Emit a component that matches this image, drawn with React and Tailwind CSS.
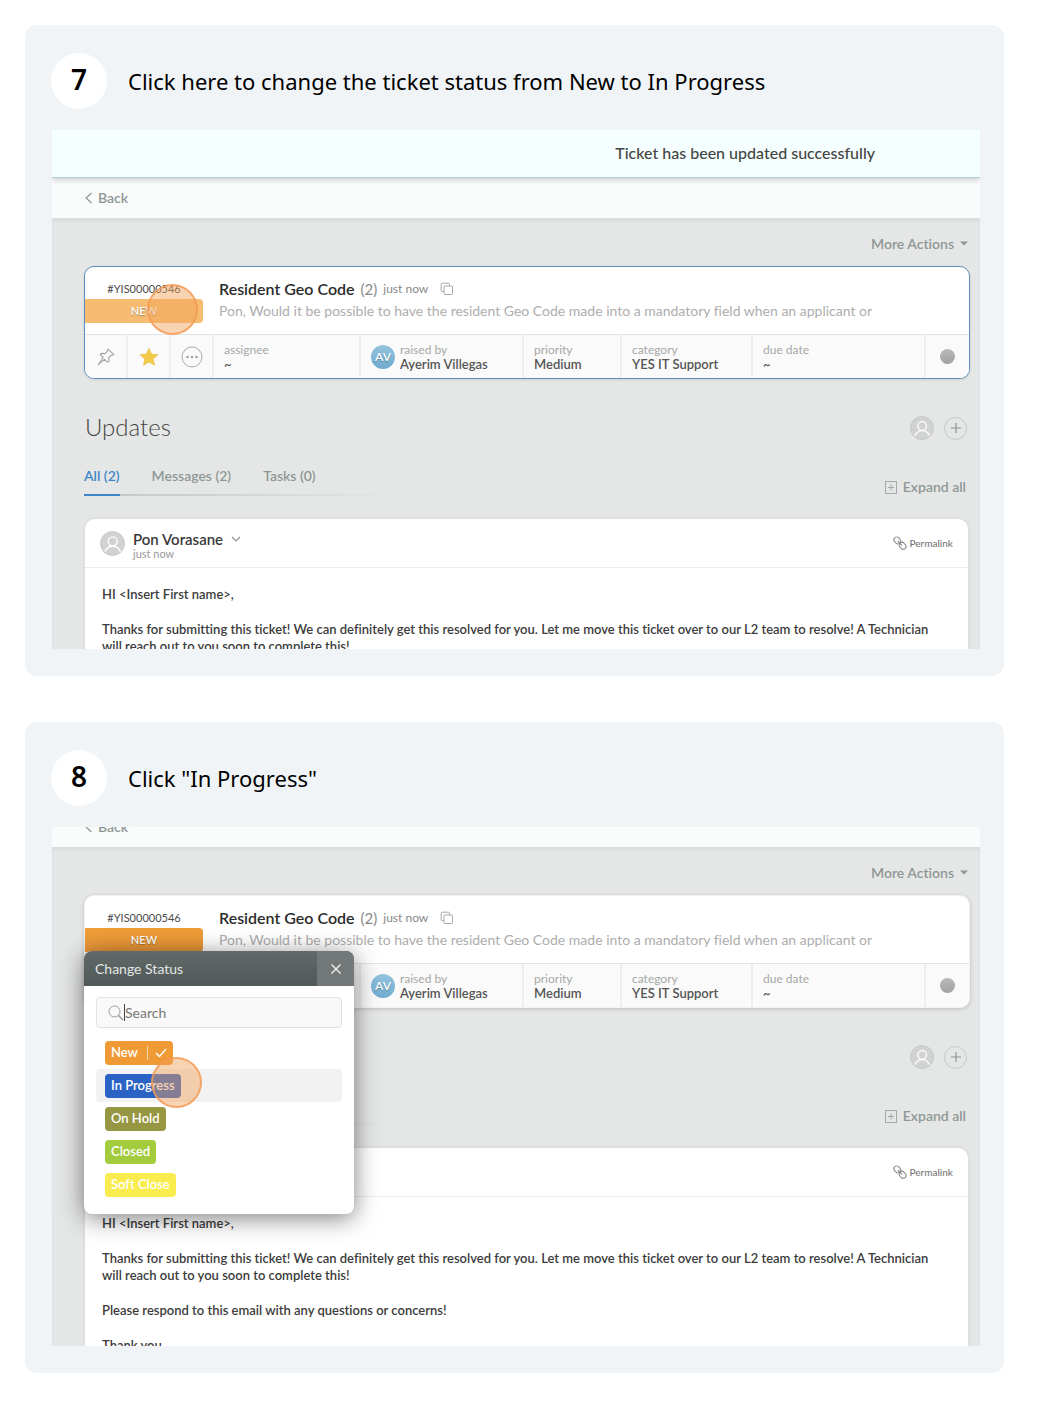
import React from "react";

function PersonIcon({ className }) {
  return (
    <svg viewBox="0 0 24 24" className={className} fill="none" aria-hidden="true">
      <circle cx="12" cy="12" r="11.5" fill="#d1d2d2" stroke="#c3c5c5" strokeWidth="0.8" />
      <circle cx="12.2" cy="10" r="4.3" stroke="#fff" strokeWidth="1.3" />
      <path d="M4.800 19.800c1.400-3.300 4-5.200 7.400-5.200s6 1.900 7.400 5.200" stroke="#fff" strokeWidth="1.3" />
    </svg>
  );
}

function PinIcon() {
  return (
    <svg viewBox="0 0 18 18" className="size-[18px]" fill="none" stroke="#a3a3a3" strokeWidth="1.1" strokeLinejoin="round" aria-hidden="true">
      <path d="M11.300 1.300l5.400 5-1.300.900-.9-.2-2.800 2.700.3 3.700-1.400.9-3.100-3L1.200 16.700l5-7.200-3-2.900 1-1.200 3.700.2 2.700-2.500-.3-1z" />
    </svg>
  );
}

function StarIcon() {
  return (
    <svg viewBox="0 0 20 20" className="size-5" aria-hidden="true">
      <path d="M10 1.200l2.600 5.900 6.400.6-4.800 4.300 1.400 6.300L10 15l-5.600 3.300L5.800 12 1 7.700l6.400-.6z" fill="#f3cb4a" stroke="#e9c04a" strokeWidth="0.7" strokeLinejoin="round" />
    </svg>
  );
}

function MoreIcon() {
  return (
    <svg viewBox="0 0 22 22" className="size-[22px]" aria-hidden="true">
      <circle cx="11" cy="11" r="10" fill="none" stroke="#a9a9a9" strokeWidth="1" />
      <circle cx="6.500" cy="11" r="1.200" fill="#9a9a9a" />
      <circle cx="11" cy="11" r="1.200" fill="#9a9a9a" />
      <circle cx="15.500" cy="11" r="1.200" fill="#9a9a9a" />
    </svg>
  );
}

function CopyIcon() {
  return (
    <svg viewBox="0 0 14 14" className="size-3.5" fill="none" stroke="#a6a6a6" strokeWidth="1" aria-hidden="true">
      <rect x="4" y="4" width="8.500" height="8.500" rx="1" />
      <path d="M3.800 9.500H2.200a1 1 0 0 1-1-1V2.200a1 1 0 0 1 1-1h6.300a1 1 0 0 1 1 1v1.600" />
    </svg>
  );
}

function LinkIcon() {
  return (
    <svg viewBox="0 0 14 16" className="h-4 w-3.5" fill="none" stroke="#8c8c8c" strokeWidth="1.100" aria-hidden="true">
      <rect x="1.500" y="1.700" width="5.600" height="7.400" rx="2.800" transform="rotate(-42 4.300 5.400)" />
      <rect x="6.800" y="7.100" width="5.600" height="7.400" rx="2.800" transform="rotate(-42 9.600 10.800)" />
      <path d="M4.800 6l4.200 4.500" />
    </svg>
  );
}

function BackBar() {
  return (
    <div className="h-[41px] border-b border-[#dcdfde] bg-[#fafcfb] pl-8">
      <a href="#back" className="flex h-10 items-center gap-1 text-sm font-semibold text-[#8e9795]">
        <svg viewBox="0 0 10 12" className="h-3 w-2.5" fill="none" stroke="#8e9795" strokeWidth="1.200" aria-hidden="true">
          <path d="M7.500 1L2 6l5.500 5" />
        </svg>
        Back
      </a>
    </div>
  );
}

function Field({ label, value, width, icon }) {
  return (
    <div className={`flex items-center border-r-2 border-[#eeeeee] ${width}`}>
      {icon}
      <dl className="leading-[14px]">
        <dt className="text-xs leading-[14px] text-[#a6a8a7]">{label}</dt>
        <dd className="text-[13px] leading-[14px] font-semibold text-[#555]">{value}</dd>
      </dl>
    </div>
  );
}

function TicketCard({ active, children }) {
  const frame = active
    ? "border-[#5f8fc0] shadow-[0_1px_3px_rgba(0,0,0,0.1)]"
    : "border-[#f3f3f3] shadow-[0_1px_4px_rgba(0,0,0,0.18)]";
  const badge = active ? "bg-[#f6bd72]" : "bg-linear-to-b from-[#f09e36] to-[#e8963a]";
  return (
    <article className={`relative rounded-[10px] border bg-white ${frame}`}>
      <div className="flex h-[67px]">
        <div className="w-[118px] shrink-0 pt-[15px] text-center">
          <div className="h-[17px] text-[11px] leading-[13px] text-[#4a4a4a]">#YIS00000546</div>
          <button className={`block h-6 w-full rounded-r-sm text-[11px] font-semibold text-white [text-shadow:0_1px_1px_rgba(0,0,0,0.3)] ${badge}`}>NEW</button>
        </div>
        <div className="min-w-0 flex-1 pt-[11px] pl-4 whitespace-nowrap">
          <div className="flex h-[22px] items-center">
            <h3 className="text-base font-semibold text-[#2b2b2b]">Resident Geo Code</h3>
            <span className="ml-1.5 text-[15px] text-[#888]">(2)</span>
            <span className="ml-1.5 text-xs text-[#888]">just now</span>
            <button aria-label="Copy" className="ml-3"><CopyIcon /></button>
          </div>
          <p className="text-sm leading-[22px] text-[#adadad]">
            Pon, Would it be possible to have the resident Geo Code made into a mandatory field when an applicant or
          </p>
        </div>
      </div>
      <div className="flex h-11 overflow-hidden rounded-b-[9px] border-t border-[#e4e4e4] bg-[#fafafa]">
        <button aria-label="Pin" className="flex w-[43px] items-center justify-center border-r-2 border-[#eeeeee]"><PinIcon /></button>
        <button aria-label="Star" className="flex w-[43px] items-center justify-center border-r-2 border-[#eeeeee]"><StarIcon /></button>
        <button aria-label="More" className="flex w-[43px] items-center justify-center border-r-2 border-[#eeeeee]"><MoreIcon /></button>
        <Field label="assignee" value="~" width="w-[147px] pl-2.5" />
        <Field
          label="raised by"
          value="Ayerim Villegas"
          width="w-[163px] pl-2.5"
          icon={<span className="mr-[5px] flex size-6 items-center justify-center rounded-full bg-linear-to-b from-[#93c3de] to-[#6fabcf] text-xs font-semibold text-white [text-shadow:0_1px_1px_rgba(0,0,0,0.3)]">AV</span>}
        />
        <Field label="priority" value="Medium" width="w-[98px] pl-2.5" />
        <Field label="category" value="YES IT Support" width="w-[131px] pl-2.5" />
        <Field label="due date" value="~" width="flex-1 pl-2.5" />
        <div className="flex w-[43px] items-center justify-center">
          <span className="size-[15px] rounded-full bg-linear-to-b from-[#b9b9b9] to-[#a3a1a2]" />
        </div>
      </div>
      {children}
    </article>
  );
}

function UpdatesPanel({ children }) {
  return (
    <section>
      <div className="flex h-[61px] items-end justify-between pr-[3px] pl-px">
        <h2 className="mb-[-3px] text-2xl leading-[32px] text-[#444] font-light">Updates</h2>
        <div className="flex items-center gap-2.5">
          <PersonIcon className="size-6" />
          <button aria-label="Add" className="flex size-[23px] items-center justify-center rounded-full border border-[#c6c9c8]">
            <svg viewBox="0 0 12 12" className="size-3" stroke="#8f9292" strokeWidth="1.200" aria-hidden="true"><path d="M1 6h10M6 1v10" /></svg>
          </button>
        </div>
      </div>
      <div className="flex justify-between pr-1">
        <div className="pt-[22px]">
          <nav className="flex h-8 w-[316px] gap-8 text-sm leading-[28px] font-semibold whitespace-nowrap text-[#8e9795]">
            <a href="#all" className="text-[#3f86c8]">All (2)</a>
            <a href="#messages">Messages (2)</a>
            <a href="#tasks">Tasks (0)</a>
          </nav>
          <div className="flex h-0.5">
            <span className="w-9 bg-[#3f86c8]" />
            <span className="flex-1 bg-linear-to-r from-[#c6c9c8] to-transparent" />
          </div>
        </div>
        <button className="mt-[35px] flex h-6 items-center gap-1.5 text-sm font-semibold text-[#8e9795]">
          <svg viewBox="0 0 12 13" className="h-[13px] w-3" fill="none" stroke="#a4aaa8" aria-hidden="true">
            <rect x="0.500" y="0.500" width="11" height="12" />
            <path d="M3 6.500h6M6 3.500v6" />
          </svg>
          Expand all
        </button>
      </div>
      <article className="mt-5 mr-0.5 ml-px h-[260px] rounded-t-[10px] bg-white shadow-[0_0_4px_rgba(0,0,0,0.08)]">
        <header className="flex h-[49px] justify-between border-b border-dotted border-[#dedede] px-[15px]">
          <div className="flex items-center gap-2">
            <PersonIcon className="size-[25px]" />
            <div className="pt-1">
              <button className="flex items-center gap-2 text-[15px] leading-[17px] font-semibold text-[#3a3a3a]">
                Pon Vorasane
                <svg viewBox="0 0 10 6" className="h-1.5 w-2.5" fill="none" stroke="#8f8f8f" strokeWidth="1.200" aria-hidden="true"><path d="M1 1l4 4 4-4" /></svg>
              </button>
              <div className="text-[11px] leading-[12px] text-[#999]">just now</div>
            </div>
          </div>
          <a href="#permalink" className="flex items-center gap-0.5 text-[10px] font-medium text-[#777]"><LinkIcon />Permalink</a>
        </header>
        <div className="space-y-[18px] px-[17px] pt-[18px] text-[13px] leading-[17px] font-semibold whitespace-nowrap text-[#3c3c3c]">
          <p>HI &lt;Insert First name&gt;,</p>
          <p>
            Thanks for submitting this ticket! We can definitely get this resolved for you. Let me move this ticket over to our L2 team to resolve! A Technician
            <br />
            will reach out to you soon to complete this!
          </p>
          {children}
        </div>
      </article>
    </section>
  );
}

function TicketPage({ active, popup, children }) {
  return (
    <div className="bg-[#e5e7e6] shadow-[inset_0_2px_3px_rgba(0,0,0,0.05)]">
      <div className="pr-2.5 pl-8">
        <div className="flex h-[47px] items-center justify-end pt-0.5 pr-0.5">
          <button className="flex items-center gap-1.5 text-sm font-semibold text-[#8e9795]">
            More Actions
            <svg viewBox="0 0 8 5" className="h-[5px] w-2" fill="#8e9795" aria-hidden="true"><path d="M0 0.500h8L4 4.500z" /></svg>
          </button>
        </div>
        <TicketCard active={active}>{popup}</TicketCard>
        <UpdatesPanel>{children}</UpdatesPanel>
      </div>
    </div>
  );
}

function StatusOption({ name, color, selected, hovered }) {
  return (
    <li className={`flex h-[33px] items-center rounded-sm pl-[9px] ${hovered ? "bg-[#f2f2f2]" : ""}`}>
      <button className={`flex h-6 items-center rounded px-1.5 text-[13px] font-semibold text-white ${color}`}>
        {name}
        {selected && (
          <>
            <span className="mr-[7px] ml-[9px] h-3.5 w-px bg-white/60" />
            <svg viewBox="0 0 12 10" className="h-2.5 w-3" fill="none" stroke="#fff" strokeWidth="1.500" aria-hidden="true"><path d="M1 5l3.500 3.500L11 1" /></svg>
          </>
        )}
      </button>
    </li>
  );
}

function StatusPopup() {
  return (
    <div role="dialog" aria-label="Change Status" className="absolute top-[55px] -left-px z-10 h-[263px] w-[270px] overflow-hidden rounded-lg bg-white shadow-[0_4px_24px_rgba(0,0,0,0.5)]">
      <div className="flex h-[35px] bg-linear-to-b from-[#626968] to-[#515a59] text-[#e3e6e5]">
        <h4 className="flex flex-1 items-center pl-[11px] text-sm">Change Status</h4>
        <button aria-label="Close" className="flex w-[37px] items-center justify-center bg-[#727978]">
          <svg viewBox="0 0 10 10" className="size-2.5" stroke="#f2f2f2" strokeWidth="1.400" aria-hidden="true"><path d="M0.500 0.500l9 9M9.500 0.500l-9 9" /></svg>
        </button>
      </div>
      <div className="px-3 pt-[11px]">
        <label className="flex h-[31px] items-center rounded border border-[#e2e2e2] bg-[#f9f9f9] pl-[11px]">
          <svg viewBox="0 0 16 16" className="size-4 shrink-0" fill="none" stroke="#9a9a9a" aria-hidden="true">
            <circle cx="6.500" cy="6.500" r="5.500" />
            <path d="M10.500 10.500l4.500 4.500" strokeWidth="1.600" />
          </svg>
          <span className="h-[17px] w-px bg-[#444]" />
          <input aria-label="Search statuses" placeholder="Search" className="w-0 flex-1 bg-transparent text-sm outline-none placeholder:text-[#777]" />
        </label>
        <ul className="pt-2">
          <StatusOption name="New" color="bg-[#f09a35]" selected />
          <StatusOption name="In Progress" color="bg-[#2a62c6]" hovered />
          <StatusOption name="On Hold" color="bg-[#979642]" />
          <StatusOption name="Closed" color="bg-[#a2cb3e]" />
          <StatusOption name="Soft Close" color="bg-[#f8ec4f]" />
        </ul>
      </div>
    </div>
  );
}

function ClickMarker({ place }) {
  return <span className={`pointer-events-none absolute z-20 size-[51px] rounded-full border-2 border-[#f39a55]/80 bg-[#f2a056]/45 ${place}`} />;
}

function Step({ number, title, children }) {
  return (
    <section className="rounded-xl bg-[#f0f4f7] pt-7 pr-6 pb-[27px] pl-[27px]">
      <header className="-ml-px flex h-14 items-center gap-[21px]">
        <span className="flex size-14 items-center justify-center rounded-full bg-white pb-1 text-[28px] leading-8 font-semibold text-black">{number}</span>
        <h1 className="pt-px text-[22px] text-black">{title}</h1>
      </header>
      <div className="relative mt-[21px] h-[519px] overflow-hidden bg-[#e5e7e6] font-[Lato,sans-serif] [font-variant-ligatures:none]">{children}</div>
    </section>
  );
}

export default function App() {
  return (
    <main className="flex flex-col gap-[46px] bg-white pt-[25px] pr-10 pb-[43px] pl-[25px] font-['Noto_Sans',sans-serif]">
      <Step number="7" title="Click here to change the ticket status from New to In Progress">
        <div role="status" className="relative flex h-12 items-center justify-end border-b border-[#b5d0d4] bg-[#f6ffff] pr-[105px] pb-0.5 text-base font-medium text-[#444] shadow-[0_2px_6px_rgba(0,0,0,0.2)]">
          Ticket has been updated successfully
        </div>
        <BackBar />
        <TicketPage active />
        <ClickMarker place="top-[154px] left-[95px]" />
      </Step>
      <Step number="8" title={'Click "In Progress"'}>
        <div className="-mt-5">
          <BackBar />
          <TicketPage popup={<StatusPopup />}>
            <p>Please respond to this email with any questions or concerns!</p>
            <p>Thank you,</p>
          </TicketPage>
        </div>
        <ClickMarker place="top-[230px] left-[99px]" />
      </Step>
    </main>
  );
}
